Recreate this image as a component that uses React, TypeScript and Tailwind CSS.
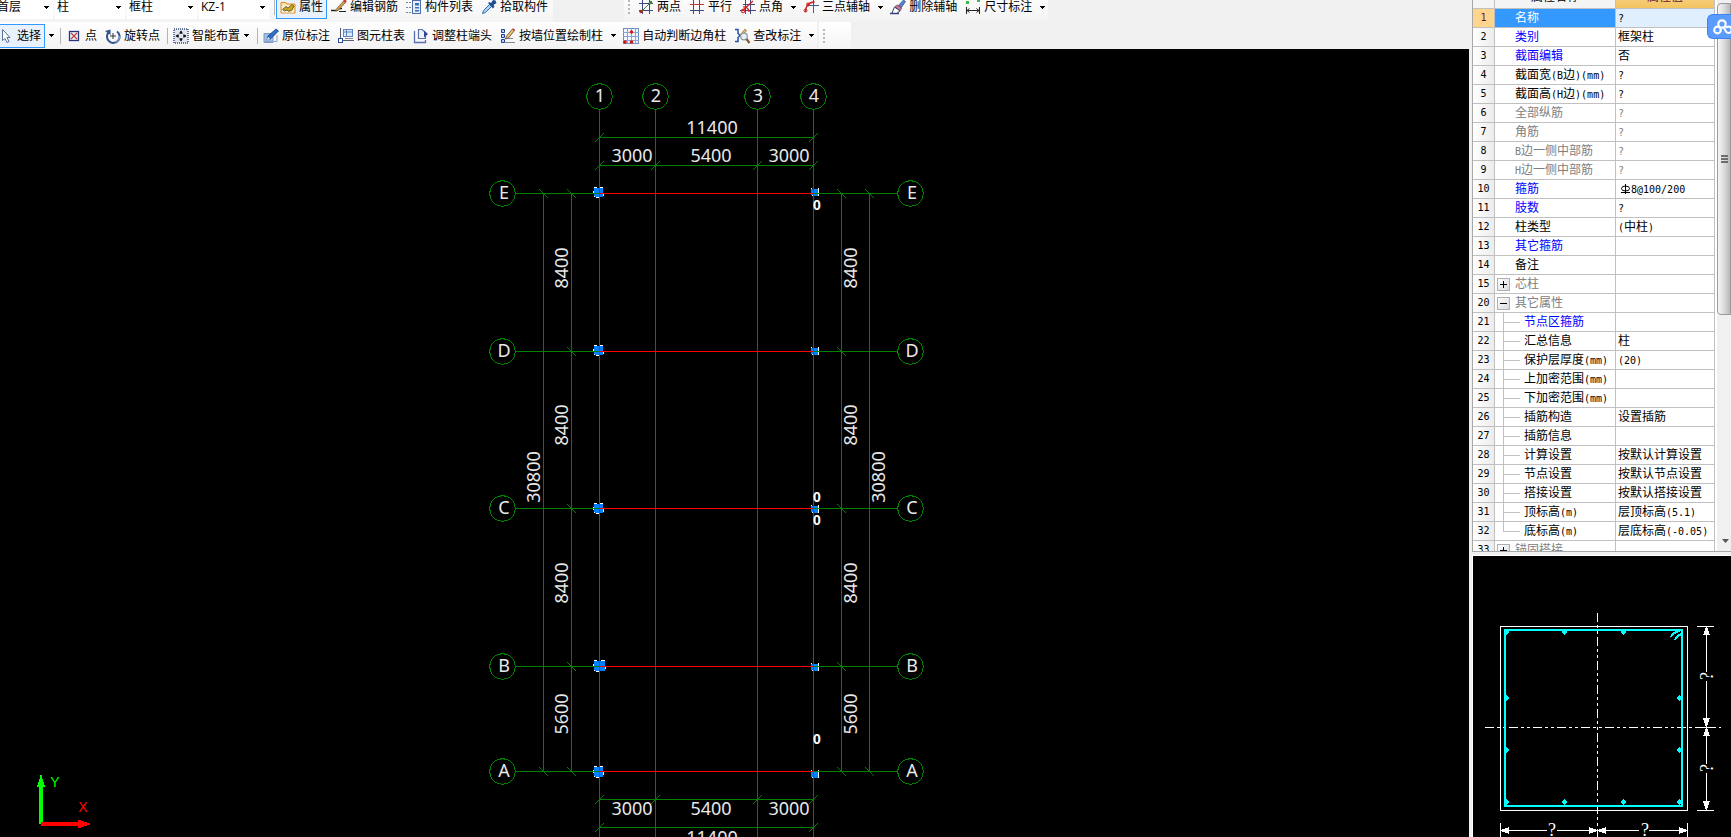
import React from "react";

/* ---------- toolbar icons (16 x 16) ---------- */

function Icon({ children }: { children: React.ReactNode }) {
  return (
    <svg viewBox="0 0 16 16" className="h-4 w-4 shrink-0" fill="none" aria-hidden="true">
      {children}
    </svg>
  );
}

const PropertyIcon = () => (
  <Icon>
    <path d="M1 3.500h5l1 1.500h8v9H1z" fill="#fbe3a6" stroke="#e58a1f" />
    <path d="M2 6.500h12v7H2z" fill="#f3efe2" />
    <path d="M2.500 10.500l3.500-3 2 1.500 4-3.500 2 1.500-2 4-3 1.500-2-1.500-2.500 1z" fill="#c9a520" stroke="#5b470c" strokeWidth=".8" />
  </Icon>
);
const RebarIcon = () => (
  <Icon>
    <path d="M0 11.500h5c2 0 2-2 4-2h2" stroke="#222" strokeWidth="1.500" />
    <path d="M5 10.500L13 1.500l2 1.500-8 8.500-2.500.5z" fill="#c9a55a" stroke="#7b4a1c" strokeWidth=".7" />
    <path d="M12.500 1l2.500-.5.500 2-1 1.500-2-1.500z" fill="#d33a2c" />
    <path d="M8 12.500h7" stroke="#222" />
  </Icon>
);
const ListIcon = () => (
  <Icon>
    <path d="M0 3.500h5M0 8.500h5M0 13.500h5" stroke="#7c8796" strokeDasharray="2 1" />
    <rect x="6.500" y="1.500" width="8" height="13" fill="#e6eef9" stroke="#4a6ea8" />
    <path d="M9 4h4v2.500H9zM9 8h4v1.500H9zM9 11h4v1.500H9z" fill="#3d6cb4" />
  </Icon>
);
const PickerIcon = () => (
  <Icon>
    <path d="M1.500 14.500l1-3 6-6 2 2-6 6z" fill="#a9d2f2" stroke="#2f6fae" />
    <path d="M7 4l1.500-1 1.500 1 2-3 2.500.5 1 2.500-3 2 1 1.500-1.500 2z" fill="#1c4f96" />
  </Icon>
);
const TwoPointIcon = () => (
  <Icon>
    <path d="M4.500 1v14M11.500 1v14M1 4.500h14M1 11.500h14" stroke="#3d4a84" />
    <path d="M2 14L14 2" stroke="#3c8a2c" />
    <circle cx="3" cy="12.500" r="1.700" fill="#b02a1c" />
    <circle cx="12.500" cy="3.500" r="1.700" fill="#3c8a2c" />
  </Icon>
);
const ParallelIcon = () => (
  <Icon>
    <path d="M4.500 1v14M10.500 1v14M1 11.500h14" stroke="#3d4a84" />
    <path d="M1 5.500h14" stroke="#c03838" />
  </Icon>
);
const PointAngleIcon = () => (
  <Icon>
    <path d="M5.500 1v14M10.500 1v14M0 11.500h16M3 5.500h12" stroke="#3d4a84" />
    <path d="M2 12L13 2M3 8c3-1 6 2 6 5" stroke="#cf2020" strokeWidth="1.300" />
    <circle cx="3" cy="12" r="1.800" stroke="#cf2020" />
  </Icon>
);
const ThreePointIcon = () => (
  <Icon>
    <path d="M10.500 0v14M4 6.500h12" stroke="#3d5a9c" />
    <path d="M2.500 13c0-6 3-10 9-10" stroke="#cf2020" strokeWidth="1.300" />
    <circle cx="2.500" cy="11.500" r="1.500" stroke="#cf2020" />
    <circle cx="5" cy="5.500" r="1.500" stroke="#cf2020" />
  </Icon>
);
const EraseIcon = () => (
  <Icon>
    <path d="M8 7l5.500-6 2 1.500L11 9z" fill="#5c82c9" stroke="#2a457f" strokeWidth=".7" />
    <path d="M5 7.500l2.500-1.500 4 3-1 2.500z" fill="#c77f98" stroke="#74304c" strokeWidth=".7" />
    <path d="M4.500 8l5.500 4-3.500 2.500H2l1-3z" fill="#fff" stroke="#2a3f6b" />
    <path d="M0 14.500h9" stroke="#35477a" strokeWidth="1.500" />
  </Icon>
);
const DimensionIcon = () => (
  <Icon>
    <path d="M1.500 8v7M14.500 8v7M2 11.500h12" stroke="#222" />
    <path d="M4.500 9.500L2 11.500l2.500 2M11.500 9.500l2.500 2-2.500 2" stroke="#222" />
    <path d="M1 2h3v3H1zM12 0h3v3h-3z" fill="#3fb84c" />
  </Icon>
);

const CursorIcon = () => (
  <Icon>
    <path d="M4.500 1.500v11l2.500-2 2 4 2-1-2-4h3z" fill="#fff" stroke="#5c6f96" />
  </Icon>
);
const PointIcon = () => (
  <Icon>
    <rect x="3.500" y="3.500" width="9" height="9" fill="#eef2fb" stroke="#27347c" strokeWidth="1.300" />
    <path d="M5 5l6 6M11 5l-6 6" stroke="#c23b3b" strokeWidth="1.200" />
  </Icon>
);
const RotateIcon = () => (
  <Icon>
    <path d="M3.500 4.500A6.300 6.300 0 1 0 12 3.500" stroke="#33528f" strokeWidth="2" />
    <path d="M0 3l5.500-1.500V7z" fill="#33528f" />
    <path d="M8 5v6M5 8h6" stroke="#333" />
    <path d="M15 8a6.500 6.500 0 0 1-5 6" stroke="#98b3df" />
  </Icon>
);
const SmartIcon = () => (
  <Icon>
    <rect x="1" y="1" width="14" height="14" fill="#dfe6f2" stroke="#3c4d78" strokeWidth="1.500" strokeDasharray="1 1" />
    <path d="M8 3v10M3 8h10" stroke="#111" strokeDasharray="3 4" />
    <path d="M6 5.500h4L8 2.500zM6 10.500h4l-2 3zM5.500 6v4l-3-2zM10.500 6v4l3-2z" fill="#111" />
  </Icon>
);
const InPlaceIcon = () => (
  <Icon>
    <path d="M1 5.500h9v9H1z" fill="#9fbde5" stroke="#7d9ccb" />
    <path d="M2 13.500h12V7" stroke="#8aa4cc" />
    <path d="M4 12l1-4 8-7 2.500 2L8 10.500z" fill="#2f6fc4" stroke="#163e85" strokeWidth=".8" />
    <path d="M4 12l1-3 2 2z" fill="#fff" />
  </Icon>
);
const TableIcon = () => (
  <Icon>
    <path d="M2.500 0v12M2 12.500h14" stroke="#555f72" />
    <rect x="5.500" y="1.500" width="9" height="7" fill="#dce8f8" stroke="#5b86c6" />
    <path d="M5 4h10M8.500 2v6" stroke="#5b86c6" />
    <rect x=".5" y="10.500" width="4" height="4" fill="#fff" stroke="#2c4fa0" />
    <path d="M7 10.500h8" stroke="#888" />
  </Icon>
);
const AdjustIcon = () => (
  <Icon>
    <path d="M1.500 3v11.500h11V12" stroke="#5c6fae" strokeWidth="1.300" />
    <path d="M5.500 10.500v-9h3.500l3.500 3v6z" fill="#eef3fc" stroke="#5c6fae" strokeWidth="1.200" />
    <path d="M11 2.500l4 3.500-4 3.500z" fill="#2f4a92" />
  </Icon>
);
const WallIcon = () => (
  <Icon>
    <path d="M1.500 1.500h3v3h-3zM1.500 6.500h3v3h-3zM1.500 11.500h3v3h-3z" fill="#bcd0f2" stroke="#1f3f94" />
    <path d="M5 14.500h10M5 10.500h8" stroke="#7d8797" />
    <path d="M5.500 11l1-3L12.500 1l2 1.500-6 7.500z" fill="#e3c079" stroke="#6a4a22" strokeWidth=".8" />
    <path d="M12 1l2-.5 1 1.500-1 1z" fill="#c33" />
  </Icon>
);
const AutoIcon = () => (
  <Icon>
    <rect x=".5" y=".5" width="15" height="15" fill="#f3f7fd" stroke="#6b8cc0" />
    <path d="M4.500 0v16M8.500 0v16M12.500 0v16M0 4.500h16M0 8.500h16M0 12.500h16" stroke="#86a5d2" />
    <circle cx="8.500" cy="4" r="1.700" fill="#d01818" />
    <circle cx="2" cy="14" r="1.800" fill="#d01818" />
    <circle cx="8.500" cy="14" r="1.800" fill="#d01818" />
  </Icon>
);
const CheckIcon = () => (
  <Icon>
    <path d="M1 1.500h3v4l2 2-2 2v4H1" stroke="#2750a8" strokeWidth="1.500" />
    <path d="M6 7l5-6 1.500 1.500-4 6z" fill="#e8b45c" stroke="#8a5b1c" strokeWidth=".6" />
    <circle cx="10" cy="8.500" r="3.300" fill="#e6f0f6" stroke="#8b98a6" strokeWidth="1.200" />
    <path d="M12.500 11l3 4" stroke="#8a5a2a" strokeWidth="2.200" />
  </Icon>
);

/* ---------- toolbar parts ---------- */

function Arrow() {
  return (
    <svg viewBox="0 0 5 3" className="h-[3px] w-[5px]" shapeRendering="crispEdges" aria-hidden="true">
      <path d="M0 0h5L2.500 3z" fill="#000" />
    </svg>
  );
}

function Tool({ icon, label, active, menu }: { icon: React.ReactNode; label: string; active?: boolean; menu?: "wide" | "narrow" }) {
  return (
    <div className="flex shrink-0 items-center">
      <button
        type="button"
        className={
          active
            ? "flex h-6 items-center gap-[3px] border border-[#3399ff] bg-[#e9f2fc] px-[3px] whitespace-nowrap"
            : "flex h-6 items-center gap-[3px] px-1 whitespace-nowrap"
        }
      >
        {icon}
        {label}
      </button>
      {menu && (
        <button
          type="button"
          aria-label={label + " 菜单"}
          className={menu === "wide" ? "flex h-6 w-3 items-center justify-center" : "flex h-6 w-2.5 items-center"}
        >
          <Arrow />
        </button>
      )}
    </div>
  );
}

function Combo({ value, name, first }: { value: string; name: string; first?: boolean }) {
  return (
    <div className={first ? "-ml-[5px] mr-0.5 grid w-[58px] items-center bg-white" : "mr-0.5 grid w-[70px] items-center bg-white"}>
      <select aria-label={name} className="col-start-1 row-start-1 h-6 w-full appearance-none bg-transparent pl-0.5 outline-none">
        <option>{value}</option>
      </select>
      <span className="pointer-events-none col-start-1 row-start-1 justify-self-end pr-1">
        <Arrow />
      </span>
    </div>
  );
}

const Divider = () => <span className="ml-[3px] mr-px h-4 w-px shrink-0 bg-[#b4b4b4]" />;

const Grip = () => (
  <svg viewBox="0 0 2 14" className="mx-1 h-3.5 w-0.5 shrink-0" shapeRendering="crispEdges" aria-hidden="true">
    <path d="M0 0h2v2H0zM0 4h2v2H0zM0 8h2v2H0zM0 12h2v2H0z" fill="#b8b8b8" />
  </svg>
);

function Toolbars() {
  return (
    <header className="h-[49px] shrink-0 overflow-hidden bg-[#f0f0f0] text-xs leading-3.5 text-black">
      <div className="-mt-2 flex h-[30px]">
        <div className="flex items-center bg-linear-to-b from-white to-[#f4f4f4] pr-px">
          <Combo first value="首层" name="楼层" />
          <Combo value="柱" name="构件类型" />
          <Combo value="框柱" name="构件" />
          <Combo value="KZ-1" name="名称" />
          <Divider />
          <Tool active icon={<PropertyIcon />} label="属性" />
          <Tool icon={<RebarIcon />} label="编辑钢筋" />
          <Tool icon={<ListIcon />} label="构件列表" />
          <Tool icon={<PickerIcon />} label="拾取构件" />
        </div>
        <div className="ml-[71px] flex items-center bg-linear-to-b from-white to-[#f2f2f2]">
          <Grip />
          <Tool icon={<TwoPointIcon />} label="两点" />
          <Tool icon={<ParallelIcon />} label="平行" />
          <Tool icon={<PointAngleIcon />} label="点角" menu="wide" />
          <Tool icon={<ThreePointIcon />} label="三点辅轴" menu="wide" />
          <Tool icon={<EraseIcon />} label="删除辅轴" />
          <Tool icon={<DimensionIcon />} label="尺寸标注" menu="wide" />
        </div>
      </div>
      <div className="flex h-[27px]">
        <div className="-ml-1.5 flex items-center bg-linear-to-b from-white to-[#f2f2f2]">
          <Tool active icon={<CursorIcon />} label="选择" menu="wide" />
          <Divider />
          <Tool icon={<PointIcon />} label="点" />
          <Tool icon={<RotateIcon />} label="旋转点" />
          <Divider />
          <Tool icon={<SmartIcon />} label="智能布置" menu="narrow" />
          <Divider />
          <Tool icon={<InPlaceIcon />} label="原位标注" />
          <Tool icon={<TableIcon />} label="图元柱表" />
          <Tool icon={<AdjustIcon />} label="调整柱端头" />
          <Tool icon={<WallIcon />} label="按墙位置绘制柱" menu="wide" />
          <Tool icon={<AutoIcon />} label="自动判断边角柱" />
          <Tool icon={<CheckIcon />} label="查改标注" menu="wide" />
        </div>
        <div className="ml-0.5 flex w-8 items-center bg-linear-to-b from-white to-[#f4f4f4]">
          <Grip />
        </div>
      </div>
    </header>
  );
}

/* ---------- drawing canvas ---------- */

const GREEN = "#008000";
const AXES_X = [
  { x: 599, label: "1" },
  { x: 655, label: "2" },
  { x: 757, label: "3" },
  { x: 813, label: "4" },
];
const AXES_Y = [
  { y: 144, label: "E" },
  { y: 302, label: "D" },
  { y: 459, label: "C" },
  { y: 617, label: "B" },
  { y: 722, label: "A" },
];

function bubble(cx: number, cy: number) {
  const points: string[] = [];
  for (let i = 0; i < 12; i++) {
    const a = (Math.PI * i) / 6;
    points.push((cx + 0.5 + 13 * Math.cos(a)).toFixed(1) + "," + (cy + 0.5 + 13 * Math.sin(a)).toFixed(1));
  }
  return points.join(" ");
}

const H = ({ y, x1, x2, c = GREEN }: { y: number; x1: number; x2: number; c?: string }) => (
  <rect x={x1} y={y} width={x2 - x1} height="1" fill={c} />
);
const V = ({ x, y1, y2, c = GREEN }: { x: number; y1: number; y2: number; c?: string }) => (
  <rect x={x} y={y1} width="1" height={y2 - y1} fill={c} />
);
const Slash = ({ x, y }: { x: number; y: number }) => <path d={`M${x - 4} ${y + 5}L${x + 5} ${y - 4}`} stroke={GREEN} />;
const Back = ({ x, y }: { x: number; y: number }) => <path d={`M${x - 4} ${y - 4}L${x + 5} ${y + 5}`} stroke={GREEN} />;

function Marker({ x, y, w, h }: { x: number; y: number; w: number; h: number }) {
  return (
    <g>
      <path d={`M${x} ${y}h3v1h-3zM${x + w - 4} ${y}h4v1h-4zM${x - 1} ${y + 4}h1v3h-1zM${x + w} ${y + 6}h1v3h-1zM${x + 2} ${y + h}h4v1h-4z`} fill="#fff" />
      <rect x={x} y={y + 1} width={w} height={h - 1} fill="#0080ff" />
      <path d={`M${x} ${y + h - 1}h1v1h-1z`} fill="#fff" />
    </g>
  );
}

function SmallMarker({ x, y }: { x: number; y: number }) {
  return (
    <g>
      <path d={`M${x} ${y}h1v4h-1zM${x + 7} ${y}h1v8h-1zM${x + 1} ${y + 7}h2v1h-2z`} fill="#fff" />
      <rect x={x} y={y + 1} width="7" height="6" fill="#0080ff" />
      <rect x={x + 3} y={y + 6} width="4" height="2" fill="#0080ff" />
    </g>
  );
}

function Canvas() {
  const spansX = [
    { x: 632, t: "3000" },
    { x: 711, t: "5400" },
    { x: 789, t: "3000" },
  ];
  const spansY = [
    { y: 219, t: "8400" },
    { y: 376, t: "8400" },
    { y: 534, t: "8400" },
    { y: 665, t: "5600" },
  ];
  return (
    <main className="min-h-0 flex-1 overflow-hidden bg-black">
      <svg className="block h-full w-full" role="img" aria-label="轴网平面图">
        <g shapeRendering="crispEdges">
          {[138, 296, 454].map((y) => (
            <Marker key={y} x={594} y={y} w={9} h={10} />
          ))}
          <Marker x={594} y={611} w={11} h={11} />
          <Marker x={594} y={717} w={9} h={11} />
          {[139, 298, 456, 614, 721].map((y) => (
            <SmallMarker key={y} x={811} y={y} />
          ))}
          {AXES_X.map((a) => (
            <g key={a.x} fill="none">
              <polygon points={bubble(a.x, 47)} stroke={GREEN} />
              <V x={a.x} y1={60} y2={145} />
              <V x={a.x} y1={722} y2={900} />
              <V x={a.x} y1={144} y2={722} c="#ff0000" />
              {[116, 750].map((y) => (
                <Slash key={y} x={a.x} y={y} />
              ))}
            </g>
          ))}
          {[88, 778].map((y) => (
            <g key={y}>
              <Slash x={599} y={y} />
              <Slash x={813} y={y} />
            </g>
          ))}
          {[88, 116, 750, 778].map((y) => (
            <H key={y} y={y} x1={599} x2={813} />
          ))}
          {AXES_Y.map((a) => (
            <g key={a.y} fill="none">
              <polygon points={bubble(502, a.y)} stroke={GREEN} />
              <polygon points={bubble(910, a.y)} stroke={GREEN} />
              <H y={a.y} x1={515} x2={599} />
              <H y={a.y} x1={814} x2={898} />
              <H y={a.y} x1={599} x2={814} c="#ff0000" />
              <Back x={571} y={a.y} />
              <Back x={841} y={a.y} />
            </g>
          ))}
          {[144, 722].map((y) => (
            <g key={y}>
              <Back x={543} y={y} />
              <Back x={869} y={y} />
            </g>
          ))}
          {[543, 571, 841, 869].map((x) => (
            <V key={x} x={x} y1={144} y2={722} />
          ))}
          <path d="M39 775V738h-2v-2h1v-3h1v-3h1v-4h2v4h1v3h1v3h1v2h-2v37z" fill="#00ff00" />
          <path d="M41 773h37v-2h3v1h3v1h3v1h3v2h-3v1h-3v1h-3v1h-3v-2H41z" fill="#ff0000" />
        </g>
        <g fill="#e8e8e8" fontSize="18" fontFamily="'Noto Sans', sans-serif" textAnchor="middle">
          {AXES_X.map((a) => (
            <text key={a.x} x={a.x + 1} y={53}>
              {a.label}
            </text>
          ))}
          {AXES_Y.map((a) => (
            <g key={a.y}>
              <text x={504} y={a.y + 6}>
                {a.label}
              </text>
              <text x={912} y={a.y + 6}>
                {a.label}
              </text>
            </g>
          ))}
          <text x={712} y={85}>
            11400
          </text>
          <text x={712} y={795}>
            11400
          </text>
          {spansX.map((s) => (
            <g key={s.x}>
              <text x={s.x} y={113}>
                {s.t}
              </text>
              <text x={s.x} y={766}>
                {s.t}
              </text>
            </g>
          ))}
          {spansY.map((s) => (
            <g key={s.y}>
              <text transform={`translate(568 ${s.y}) rotate(-90)`}>{s.t}</text>
              <text transform={`translate(857 ${s.y}) rotate(-90)`}>{s.t}</text>
            </g>
          ))}
          <text transform="translate(540 428) rotate(-90)">30800</text>
          <text transform="translate(885 428) rotate(-90)">30800</text>
        </g>
        <g fill="#fff" fontSize="14" fontWeight="bold" fontFamily="'Liberation Sans', sans-serif" textAnchor="middle">
          {[161, 453, 476, 695].map((y) => (
            <text key={y} x={817} y={y}>
              0
            </text>
          ))}
        </g>
        <g fontSize="14" fontFamily="'Liberation Sans', sans-serif" textAnchor="middle">
          <text x={55} y={738} fill="#00ff00">
            Y
          </text>
          <text x={83} y={763} fill="#ff0000">
            X
          </text>
        </g>
      </svg>
    </main>
  );
}

/* ---------- property table ---------- */

type Kind = "blue" | "black" | "gray";
type Row = { n: number; name: string; value?: string; kind: Kind; level?: "plus" | "minus" | "child" | "last"; rebar?: boolean };

const ROWS: Row[] = [
  { n: 1, name: "名称", value: "?", kind: "black" },
  { n: 2, name: "类别", value: "框架柱", kind: "blue" },
  { n: 3, name: "截面编辑", value: "否", kind: "blue" },
  { n: 4, name: "截面宽(B边)(mm)", value: "?", kind: "black" },
  { n: 5, name: "截面高(H边)(mm)", value: "?", kind: "black" },
  { n: 6, name: "全部纵筋", value: "?", kind: "gray" },
  { n: 7, name: "角筋", value: "?", kind: "gray" },
  { n: 8, name: "B边一侧中部筋", value: "?", kind: "gray" },
  { n: 9, name: "H边一侧中部筋", value: "?", kind: "gray" },
  { n: 10, name: "箍筋", value: "8@100/200", kind: "blue", rebar: true },
  { n: 11, name: "肢数", value: "?", kind: "blue" },
  { n: 12, name: "柱类型", value: "(中柱)", kind: "black" },
  { n: 13, name: "其它箍筋", kind: "blue" },
  { n: 14, name: "备注", kind: "black" },
  { n: 15, name: "芯柱", kind: "gray", level: "plus" },
  { n: 20, name: "其它属性", kind: "gray", level: "minus" },
  { n: 21, name: "节点区箍筋", kind: "blue", level: "child" },
  { n: 22, name: "汇总信息", value: "柱", kind: "black", level: "child" },
  { n: 23, name: "保护层厚度(mm)", value: "(20)", kind: "black", level: "child" },
  { n: 24, name: "上加密范围(mm)", kind: "black", level: "child" },
  { n: 25, name: "下加密范围(mm)", kind: "black", level: "child" },
  { n: 26, name: "插筋构造", value: "设置插筋", kind: "black", level: "child" },
  { n: 27, name: "插筋信息", kind: "black", level: "child" },
  { n: 28, name: "计算设置", value: "按默认计算设置", kind: "black", level: "child" },
  { n: 29, name: "节点设置", value: "按默认节点设置", kind: "black", level: "child" },
  { n: 30, name: "搭接设置", value: "按默认搭接设置", kind: "black", level: "child" },
  { n: 31, name: "顶标高(m)", value: "层顶标高(5.1)", kind: "black", level: "child" },
  { n: 32, name: "底标高(m)", value: "层底标高(-0.05)", kind: "black", level: "last" },
  { n: 33, name: "锚固搭接", kind: "gray", level: "plus" },
];

const COLOR: Record<Kind, string> = { blue: "text-[#0000ff]", black: "text-black", gray: "text-[#808080]" };

/* Latin runs are set smaller, so that each letter is half as wide as a Chinese one. */
function Mixed({ text }: { text: string }) {
  return (
    <span className="whitespace-nowrap">
      {text.split(/([\x20-\x7e]+)/).map((part, i) =>
        i % 2 ? (
          <span key={i} className="text-[10px]">
            {part}
          </span>
        ) : (
          part
        ),
      )}
    </span>
  );
}

function Toggle({ open, name }: { open: boolean; name: string }) {
  return (
    <button type="button" aria-label={name} className="mr-[5px] ml-0.5 flex h-[13px] w-[13px] shrink-0 items-center justify-center border border-[#b0b0b0] bg-linear-to-br from-white to-[#d8dade]">
      <svg viewBox="0 0 9 9" className="h-[9px] w-[9px]" shapeRendering="crispEdges" aria-hidden="true">
        <path d={open ? "M1 4h7v1H1z" : "M1 4h7v1H1zM4 1h1v7H4z"} fill="#000" />
      </svg>
    </button>
  );
}

function PropertyTable() {
  const cell = "h-[19px] border-r border-b border-[#c0c0c0] p-0";
  return (
    <table className="-mt-[15px] w-[242px] shrink-0 table-fixed border-separate border-spacing-0 self-start bg-white text-xs leading-4 font-['DejaVu_Sans_Mono','Noto_Sans_CJK_SC',monospace]">
      <colgroup>
        <col className="w-[22px]" />
        <col className="w-[121px]" />
        <col className="w-[99px]" />
      </colgroup>
      <thead>
        <tr>
          <th className="h-6 border-r border-b border-[#c0c0c0] bg-[#f4f4f4] p-0" />
          <th className="h-6 border-r border-b border-[#c0c0c0] bg-[#f4f4f4] p-0 font-normal">属性名称</th>
          <th className="h-6 border-r border-b border-[#c0c0c0] bg-linear-to-b from-[#fbdc9a] to-[#f2c35f] p-0 font-normal text-[#6b0f3a]">属性值</th>
        </tr>
      </thead>
      <tbody>
        {ROWS.map((r) => {
          const selected = r.n === 1;
          return (
            <tr key={r.n}>
              <td className={cell + (selected ? " bg-[#ffd58d] text-[#6b0f3a]" : " bg-linear-to-r from-white to-[#ececec]")}>
                <div className="flex h-[18px] items-center justify-center text-[10px]">{r.n}</div>
              </td>
              <td className={cell + (selected ? " bg-[#3399ff] text-white" : " " + COLOR[r.kind])}>
                <div className={r.level ? "flex h-[18px] items-center overflow-hidden" : "flex h-[18px] items-center overflow-hidden pl-5"}>
                  {(r.level === "plus" || r.level === "minus") && <Toggle open={r.level === "minus"} name={r.name} />}
                  {(r.level === "child" || r.level === "last") && (
                    <svg viewBox="0 0 25 18" className="mr-1 h-[18px] w-[25px] shrink-0" shapeRendering="crispEdges" aria-hidden="true">
                      <path d={r.level === "last" ? "M8 0h1v9h16v1H8z" : "M8 0h1v9h16v1H9v8H8z"} fill="#c0c0c0" />
                    </svg>
                  )}
                  <Mixed text={r.name} />
                </div>
              </td>
              <td className={cell + (selected ? " bg-[#e0effe]" : r.kind === "gray" ? " text-[#808080]" : " text-black")}>
                <div className="flex h-[18px] items-center overflow-hidden pl-0.5">
                  {r.rebar && (
                    <svg viewBox="0 0 11 10" className="ml-0.5 h-2.5 w-[11px] shrink-0" fill="none" stroke="#000" aria-label="HRB400">
                      <ellipse cx="5.500" cy="4.500" rx="4" ry="2.500" />
                      <path d="M5.500 0v10M1 8.500h9" shapeRendering="crispEdges" />
                    </svg>
                  )}
                  <Mixed text={r.value ?? ""} />
                </div>
              </td>
            </tr>
          );
        })}
      </tbody>
    </table>
  );
}

function ScrollBar() {
  return (
    <div className="ml-0.5 flex flex-1 flex-col items-center bg-[#f0f0f0]" aria-hidden="true">
      <div className="mt-[3px] flex h-[312px] w-full flex-col items-center justify-center gap-px rounded-l-sm border border-[#9a9a9a] bg-linear-to-r from-[#f6f6f6] via-[#dcdcdc] to-[#b9b9bd]">
        <span className="h-0.5 w-[7px] bg-[#6d6d6d]" />
        <span className="h-0.5 w-[7px] bg-[#6d6d6d]" />
        <span className="h-0.5 w-[7px] bg-[#6d6d6d]" />
      </div>
      <svg viewBox="0 0 7 4" className="mt-auto mb-2 ml-0.5 h-1 w-[7px]">
        <path d="M0 0h7L3.500 4z" fill="#555" />
      </svg>
    </div>
  );
}

/* ---------- section preview ---------- */

const Dot = ({ x, y }: { x: number; y: number }) => <path d={`M${x} ${y - 3}l3 3-3 3-3-3z`} fill="#00ffff" />;

function Preview() {
  const dash = "9 3 3 3 3 3";
  return (
    <section className="min-h-0 flex-1 overflow-hidden border-t border-l border-white bg-black">
      <svg className="block h-full w-full" role="img" aria-label="截面预览">
        <g shapeRendering="crispEdges" stroke="#fff" fill="none">
          <rect x="27.500" y="70.500" width="187" height="184" />
          <path d="M124.500 57v230M12 171.500h236" strokeDasharray={dash} />
          <path d="M224 70.500h17M224 254.500h17M233.500 71v45M233.500 125v83M233.500 217v37M224 171.500h17" />
          <path d="M27.500 267v30M214.500 267v30M28 274.500h46M84 274.500h82M176 274.500h38" />
        </g>
        <g shapeRendering="crispEdges">
          <g fill="#fff">
            <path d="M233 71h1l3 8h-7zM233 171h1l3-9h-7zM233 172h1l3 8h-7zM233 254h1l3-9h-7z" />
            <path d="M28 274v1l8 3v-7zM124 274v1l-8 3v-7zM125 274v1l8 3v-7zM214 274v1l-8 3v-7z" />
          </g>
          <rect x="32" y="74" width="177" height="176" fill="none" stroke="#00ffff" strokeWidth="2" />
          <Dot x={91} y={76} />
          <Dot x={150} y={76} />
          <Dot x={91} y={246} />
          <Dot x={150} y={246} />
          <Dot x={33} y={142} />
          <Dot x={33} y={194} />
          <Dot x={206} y={142} />
          <Dot x={206} y={194} />
          <Dot x={33} y={76} />
          <Dot x={33} y={246} />
          <Dot x={206} y={246} />
          <path d="M198 81c1-3 4-5 9-6M202 84c1-3 3-5 7-6" fill="none" stroke="#00ffff" strokeWidth="2" />
        </g>
        <g fill="#fff" fontSize="18" fontFamily="'Liberation Serif', serif" textAnchor="middle">
          <text x="79" y="280">
            ?
          </text>
          <text x="172" y="280">
            ?
          </text>
          <text transform="translate(240 120) rotate(-90)">?</text>
          <text transform="translate(240 212) rotate(-90)">?</text>
        </g>
      </svg>
    </section>
  );
}

/* ---------- page ---------- */

export default function App() {
  return (
    <div className="flex h-screen overflow-hidden bg-[#f0f0f0] font-['Open_Sans','Noto_Sans_CJK_SC',sans-serif]">
      <div className="flex min-w-0 flex-1 flex-col">
        <Toolbars />
        <Canvas />
      </div>
      <aside className="relative flex w-[262px] shrink-0 flex-col pl-[3px]">
        <div className="flex h-[552px] shrink-0 overflow-hidden border-b border-l border-[#a8a8a8] bg-white">
          <PropertyTable />
          <ScrollBar />
        </div>
        <div className="h-[3px] shrink-0" />
        <Preview />
        <button type="button" aria-label="网盘" className="absolute top-3.5 right-0 flex h-[25px] w-6 items-center rounded-l-md border border-r-0 border-[#3d82f0] bg-[#5a9bfb] pl-1">
          <svg viewBox="0 0 20 18" className="h-[18px] w-5 shrink-0" fill="none" stroke="#fff" strokeWidth="2.200" aria-hidden="true">
            <circle cx="10" cy="6" r="3.700" />
            <circle cx="5.500" cy="12" r="3.300" />
            <path d="M12 9.500c1.200 3.500 2.500 5.500 4.500 5.500a3.200 3.200 0 1 0-2.500-5.200" />
          </svg>
        </button>
      </aside>
    </div>
  );
}
